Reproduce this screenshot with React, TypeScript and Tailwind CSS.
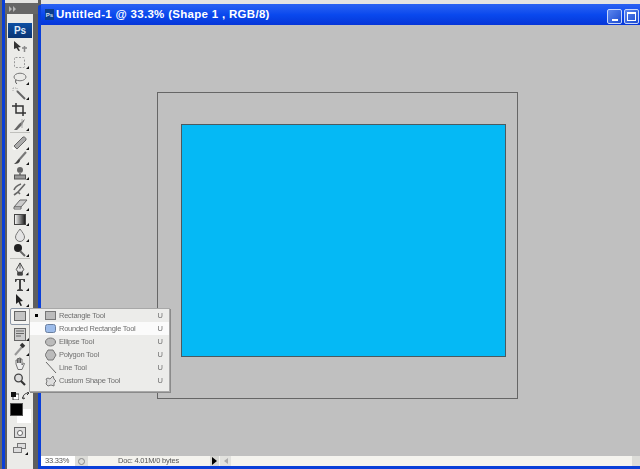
import type { ReactNode } from "react";

const S = ({ children }: { children: ReactNode }) => (
  <svg width="20" height="15" viewBox="0 0 20 15" className="block blur-[0.35px]">
    {children}
  </svg>
);

// small black triangle in the corner of tools that hold a flyout
const Corner = () => <path d="M19 11v3h-3z" fill="#111" />;

const tools: { key: string; h: number; icon: ReactNode }[] = [
  { key: "move", h: 16, icon: <S><g transform="translate(0 -1)"><path d="M4 2l7 6-3 .5 2 3-1.500 .5-2-3L4 10z" fill="#333" /><path d="M12 9h5M14.500 7v6" stroke="#888" strokeWidth="1.500" /></g></S> },
  { key: "marquee", h: 15, icon: <S><rect x="4.500" y="2.500" width="10" height="10" rx="1" fill="none" stroke="#999" strokeDasharray="2 1.500" /><Corner /></S> },
  { key: "lasso", h: 16, icon: <S><ellipse cx="10" cy="6" rx="6" ry="3.800" fill="none" stroke="#777" /><path d="M6 9c-1 2 0 3 1 4" fill="none" stroke="#444" /><Corner /></S> },
  { key: "wand", h: 15, icon: <S><path d="M7 5l8 8" stroke="#666" strokeWidth="2" /><path d="M3 2h4v3M3 5v-3" stroke="#aaa" fill="none" strokeDasharray="1 1" /><Corner /></S> },
  { key: "crop", h: 16, icon: <S><path d="M6 1v10h10M2 4h11v10" fill="none" stroke="#333" strokeWidth="1.500" /></S> },
  { key: "slice", h: 15, icon: <S><path d="M4 13l5-6 6-5-3 6-5 5z" fill="#666" /><path d="M12 2v9" stroke="#aaa" /><Corner /></S> },
  { key: "heal", h: 19, icon: <S><path d="M4 12l9-9a2.500 2.500 0 0 1 3 3l-9 9z" transform="translate(0 -2)" fill="#aaa" stroke="#666" /><path d="M3 11l3 3-2 0-2-2z" fill="#fff" /><Corner /></S> },
  { key: "brush", h: 15, icon: <S><path d="M16 1L9 9" stroke="#777" strokeWidth="2" /><path d="M9 8c-2 1-2 3-5 5 3 0 6-1 6-4z" fill="#444" /><Corner /></S> },
  { key: "stamp", h: 15, icon: <S><circle cx="10" cy="4" r="3" fill="#666" /><path d="M9 6h2v3h-2z" fill="#888" /><rect x="4.500" y="9" width="11" height="4" fill="#999" stroke="#555" /><Corner /></S> },
  { key: "history", h: 16, icon: <S><path d="M15 2L8 10M11 2c-3 1-6 3-7 6M4 13l4-3 2 2" fill="none" stroke="#666" strokeWidth="1.600" /><Corner /></S> },
  { key: "eraser", h: 15, icon: <S><path d="M4 10l6-7h7l-6 7z" fill="#ccc" stroke="#666" /><path d="M4 10v2h7l0-2z" fill="#eee" stroke="#666" /><Corner /></S> },
  { key: "gradient", h: 15, icon: <S><defs><linearGradient id="gr"><stop offset="0" stopColor="#fff" /><stop offset="1" stopColor="#111" /></linearGradient></defs><rect x="4.500" y="2.500" width="11" height="10" fill="url(#gr)" stroke="#444" /><Corner /></S> },
  { key: "blur", h: 16, icon: <S><path d="M10 1c3 4 4.500 6 4.500 8a4.500 4.500 0 0 1-9 0c0-2 1.500-4 4.500-8z" fill="#e4e4e4" stroke="#777" /><Corner /></S> },
  { key: "dodge", h: 15, icon: <S><circle cx="8" cy="5" r="4" fill="#222" /><path d="M10 8l5 5" stroke="#666" strokeWidth="2" /><Corner /></S> },
  { key: "pen", h: 18, icon: <S><path d="M10 1l4 7-2 3H8L6 8z" fill="#e4e4e4" stroke="#444" /><path d="M10 1v6M7.500 11h5v3h-5z" fill="#444" stroke="#444" /><Corner /></S> },
  { key: "type", h: 16, icon: <S><path d="M5 2h10v3h-1l-1-2h-2v9l2 1v1H7v-1l2-1V3H7L6 5H5z" fill="#444" /><Corner /></S> },
  { key: "select", h: 16, icon: <S><path d="M6 1l7 7-3 .5 2 4-1.500 .5-2-4L6 11z" fill="#222" /><Corner /></S> },
];

const tools2: { key: string; h: number; icon: ReactNode }[] = [
  { key: "notes", h: 15, icon: <S><rect x="4.500" y="1.500" width="11" height="12" fill="#ccc" stroke="#666" /><path d="M6 4h8M6 6.500h8M6 9h5" stroke="#666" /><Corner /></S> },
  { key: "dropper", h: 15, icon: <S><g transform="translate(0 -1)"><path d="M5 14l7-8" stroke="#999" strokeWidth="2" /><path d="M11 3l3 3" stroke="#333" strokeWidth="3.500" /></g><Corner /></S> },
  { key: "hand", h: 15, icon: <S><g transform="translate(0 -1)"><path d="M6 8V4h1.500v3V2.500H9V7V2h1.500v5V3H12v6l1.500-2 1 .5-2.500 6H8z" fill="#eee" stroke="#555" strokeWidth=".8" /></g></S> },
  { key: "zoom", h: 15, icon: <S><circle cx="8.500" cy="6" r="3.800" fill="#ddd" stroke="#444" strokeWidth="1.300" /><path d="M11 9l4 4" stroke="#333" strokeWidth="2.200" /></S> },
];

const flyout = [
  { label: "Rectangle Tool", icon: <rect x=".5" y="1.500" width="10" height="8" fill="#bbb" stroke="#777" /> },
  { label: "Rounded Rectangle Tool", icon: <rect x=".5" y="1.500" width="10" height="8" rx="2" fill="#9dbcea" stroke="#6a7f9f" />, active: true },
  { label: "Ellipse Tool", icon: <ellipse cx="5.500" cy="6" rx="5" ry="4" fill="#bbb" stroke="#777" /> },
  { label: "Polygon Tool", icon: <path d="M3 1h5l3 5-3 5H3L0 6z" fill="#bbb" stroke="#777" /> },
  { label: "Line Tool", icon: <path d="M1 0l10 11" stroke="#666" /> },
  { label: "Custom Shape Tool", icon: <path d="M3 3l2 1 3-3 1 3 2 2-2 2 0 3-3-1-3 1-2-2 1-3-1-2z" fill="#ddd" stroke="#777" /> },
];

function Toolbar() {
  return (
    <div className="flex h-full w-[41px] shrink-0 bg-[#5e5e5e]">
      <div className="w-[2px] bg-[#6a6a6a]" />
      <div className="w-[3px] bg-[#0a3fd8]" />
      <div className="flex w-[33px] flex-col">
        <div className="h-[3px] bg-[#e4e4e2]" />
        <div className="flex h-[11px] items-center bg-[#666666] pl-[4px] pt-[1px]">
          <svg width="8" height="6" viewBox="0 0 8 6"><path d="M0 0l3 3-3 3zM4 0l3 3-3 3z" fill="#b5b5b5" /></svg>
        </div>
        <div className="ml-[2px] flex w-[26px] flex-1 flex-col items-center bg-[#ebebe8] pt-[9px]">
          <div className="flex h-[15px] w-[24px] items-center justify-center bg-gradient-to-b from-[#0e4fa3] to-[#0a3474] font-['Liberation_Sans',sans-serif] text-[10px] font-bold leading-none text-[#dfe9f7]">
            Ps
          </div>
          <div className="h-[1px]" />
          {tools.map((t, i) => (
            <div key={t.key} className="flex w-full flex-col items-center justify-end" style={{ height: t.h }}>
              {(i === 6 || i === 14) && <div className="mb-[3px] h-px w-[20px] bg-[#c0c0bc]" />}
              {t.icon}
            </div>
          ))}
          <div className="flex h-[17px] w-[21px] shrink-0 items-center justify-center rounded-[2px] border border-[#8d98a8] bg-[#f4f4f2]">
            <svg width="13" height="11" viewBox="0 0 13 11">
              <rect x=".5" y=".5" width="11" height="9" fill="#c4c4c4" stroke="#666666" />
            </svg>
          </div>
          <div className="h-[2px]" />
          {tools2.map((t) => (
            <div key={t.key} className="flex w-full justify-center" style={{ height: t.h }}>
              {t.icon}
            </div>
          ))}
          <div className="mt-[4px] flex h-[10px] w-full items-center gap-[3px] pl-[4px]">
            <svg width="8" height="8" viewBox="0 0 8 8"><rect x="2" y="2" width="6" height="6" fill="#fff" stroke="#444" /><rect width="5" height="5" fill="#111" /></svg>
            <svg width="8" height="8" viewBox="0 0 8 8"><path d="M1 6c0-3 2-5 6-5M5 0l2 1-2 2M0 5l1 2 2-1" fill="none" stroke="#333" /></svg>
          </div>
          <div className="relative mt-[2px] h-[22px] w-full">
            <div className="absolute left-[10px] top-[6px] h-[14px] w-[14px] bg-white" />
            <div className="absolute left-[3px] top-0 h-[13px] w-[13px] border border-[#555] bg-black" />
          </div>
          <div className="mt-[2px] flex h-[11px] w-[12px] items-center justify-center border border-[#666] bg-[#dddddd]">
            <div className="h-[6px] w-[6px] rounded-full border border-[#666] bg-white" />
          </div>
          <div className="mt-[4px]">
            <svg width="17" height="13" viewBox="0 0 17 13">
              <rect x="5.500" y="1.500" width="8" height="5" fill="#ddd" stroke="#777" />
              <rect x="1.500" y="5.500" width="8" height="5" fill="#ddd" stroke="#777" />
              <path d="M16 10v3h-3z" fill="#111" />
            </svg>
          </div>
        </div>
      </div>
      <div className="mt-[5px] w-[3px] rounded-tl-[2px] bg-[#0a3fd8]" />
    </div>
  );
}

function Flyout() {
  return (
    <div className="absolute left-[29px] top-[308px] z-10 h-[84px] w-[141px] border border-[#a8a8a8] bg-[#ececea] font-['Liberation_Sans',sans-serif] text-[7.500px] text-[#6f6f6f] shadow-[1px_1px_0_#8a8a8a]">
      {flyout.map((f, i) => (
        <div key={f.label} className={`flex h-[13px] items-center ${f.active ? "bg-[#fbfbfb]" : ""}`}>
          <div className="flex w-[12px] justify-center">
            {i === 0 && <div className="h-[3px] w-[3px] bg-black" />}
          </div>
          <svg width="12" height="12" viewBox="0 0 12 12" className="ml-[3px] mr-[1px] shrink-0 blur-[0.3px]">
            {f.icon}
          </svg>
          <span className="ml-[1px] flex-1 tracking-[-0.25px] whitespace-nowrap blur-[0.25px]">{f.label}</span>
          <span className="mr-[6px] blur-[0.25px]">U</span>
        </div>
      ))}
    </div>
  );
}

function DocWindow() {
  return (
    <div className="flex min-w-0 flex-1 flex-col">
      <div className="h-[4px] bg-[#e4e4e2]" />
      <div className="flex h-[21px] items-end bg-gradient-to-b from-[#2a62f2] via-[#0a49ee] to-[#0636d8] pb-[1px]">
        <div className="mb-[4px] ml-[4px] flex h-[11px] w-[9px] items-end justify-center bg-[#0c3f8d] font-['Liberation_Sans',sans-serif] text-[6px] font-bold leading-[9px] text-[#d5e2f5]">
          Ps
        </div>
        <span className="mb-[1px] ml-[2px] font-['Liberation_Sans',sans-serif] text-[11.500px] font-bold tracking-[0.3px] whitespace-nowrap text-white">
          Untitled-1 @ 33.3% (Shape 1 , RGB/8)
        </span>
        <div className="ml-auto flex gap-[2px] pr-[1px]">
          <div className="flex h-[15px] w-[15px] items-end justify-center rounded-[2px] border border-[#c7d6fa] bg-gradient-to-br from-[#5c86ee] to-[#1c49cf] pb-[2px]">
            <div className="h-[2px] w-[6px] bg-white" />
          </div>
          <div className="flex h-[15px] w-[15px] items-center justify-center rounded-[2px] border border-[#c7d6fa] bg-gradient-to-br from-[#5c86ee] to-[#1c49cf]">
            <div className="h-[9px] w-[9px] border border-t-2 border-white" />
          </div>
        </div>
      </div>
      <div className="flex-1 overflow-hidden bg-[#c0c0c0] pl-[116px] pt-[67px]">
        <div className="h-[307px] w-[361px] border border-[#666666] pl-[23px] pt-[31px]">
          <div className="h-[233px] w-[325px] border border-[#4b5a60] bg-[#05b9f5]" />
        </div>
      </div>
      <div className="flex h-[10px] items-stretch bg-[#f4f3ee] font-['Liberation_Sans',sans-serif] text-[7.500px] leading-[10px] text-[#555555]">
        <div className="w-[34px] bg-white pl-[4px] tracking-[-0.2px] blur-[0.25px]">33.33%</div>
        <div className="flex w-[13px] items-center justify-center bg-[#dcdcd8]">
          <div className="h-[7px] w-[7px] rounded-full border border-[#888]" />
        </div>
        <div className="w-[122px] pl-[30px] tracking-[-0.2px] whitespace-nowrap blur-[0.25px]">Doc: 4.01M/0 bytes</div>
        <div className="flex w-[9px] items-center justify-center bg-[#d8d8d4]">
          <svg width="5" height="8" viewBox="0 0 5 8"><path d="M0 0l5 4-5 4z" fill="#000" /></svg>
        </div>
        <div className="ml-[1px] flex w-[11px] items-center justify-center bg-[#e2e2de]">
          <svg width="4" height="6" viewBox="0 0 4 6"><path d="M4 0L0 3l4 3z" fill="#aaa" /></svg>
        </div>
        <div className="flex-1" />
        <div className="w-[8px] bg-[#dcdcd8]" />
      </div>
      <div className="h-[3px] bg-[#0a3fd8]" />
    </div>
  );
}

export default function App() {
  return (
    <div className="relative flex h-[469px] w-[640px] overflow-hidden bg-[#5e5e5e]">
      <Toolbar />
      <DocWindow />
      <Flyout />
    </div>
  );
}
